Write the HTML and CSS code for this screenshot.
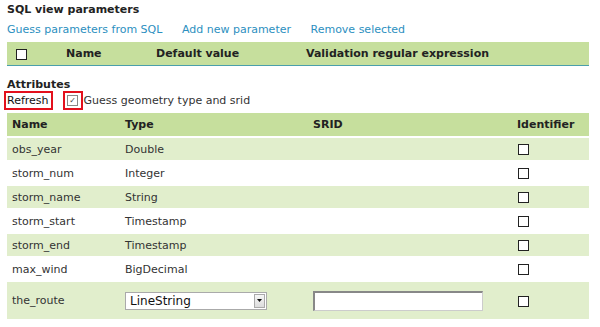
FILE: index.html
```html
<!DOCTYPE html>
<html lang="en">
<head>
  <meta charset="UTF-8">
  <title>SQL view</title>
  <link rel="stylesheet" href="styles.css">
</head>
<body>
  <div class="page">
    <h3 class="sectionTitle">SQL view parameters</h3>
    <div class="links">
      <a href="#">Guess parameters from SQL</a>
      <a href="#">Add new parameter</a>
      <a href="#">Remove selected</a>
    </div>
    <table class="grid paramGrid">
      <thead>
        <tr>
          <th class="colCheck"><span class="box"></span></th>
          <th class="colPName">Name</th>
          <th class="colDefault">Default value</th>
          <th>Validation regular expression</th>
        </tr>
      </thead>
    </table>

    <h3 class="sectionTitle attrTitle">Attributes</h3>
    <div class="attrTools">
      <a href="#" class="refresh">Refresh</a>
      <span class="guessBox"><span class="box checked">&#10003;</span></span>
      <span class="guessLabel">Guess geometry type and srid</span>
    </div>
    <table class="grid attrGrid">
      <thead>
        <tr>
          <th class="colName">Name</th>
          <th class="colType">Type</th>
          <th class="colSrid">SRID</th>
          <th>Identifier</th>
        </tr>
      </thead>
      <tbody>
        <tr class="odd"><td>obs_year</td><td>Double</td><td></td><td><span class="box"></span></td></tr>
        <tr><td>storm_num</td><td>Integer</td><td></td><td><span class="box"></span></td></tr>
        <tr class="odd"><td>storm_name</td><td>String</td><td></td><td><span class="box"></span></td></tr>
        <tr><td>storm_start</td><td>Timestamp</td><td></td><td><span class="box"></span></td></tr>
        <tr class="odd"><td>storm_end</td><td>Timestamp</td><td></td><td><span class="box"></span></td></tr>
        <tr><td>max_wind</td><td>BigDecimal</td><td></td><td><span class="box"></span></td></tr>
        <tr class="odd tall">
          <td>the_route</td>
          <td>
            <div class="select">
              <span>LineString</span>
              <span class="arrow">
                <svg width="5" height="3" viewBox="0 0 5 3"><path d="M0 0h5L2.5 3z" fill="#111"/></svg>
              </span>
            </div>
          </td>
          <td><div class="textInput"></div></td>
          <td><span class="box"></span></td>
        </tr>
      </tbody>
    </table>
  </div>
</body>
</html>
```

FILE: styles.css
```css
body{
  margin: 0;
  font-family: "DejaVu Sans", Verdana, sans-serif;
  font-size: 11px;
  color: #333;
  background: #fff;
}
.page{
  padding: 3px 11px 0 7px;
}
.sectionTitle{
  margin: 0;
  font-size: 11px;
  font-weight: bold;
  line-height: 14px;
  color: #222;
}
.links{
  margin-top: 6px;
  line-height: 14px;
}
.links a{
  color: #2c8fc0;
  text-decoration: none;
  margin-right: 16px;
}
.grid{
  width: 100%;
  border-collapse: collapse;
  table-layout: fixed;
}
.grid th{
  background: #c6df9d;
  text-align: left;
  font-weight: bold;
  color: #222;
  height: 23px;
  padding: 0 5px;
  border-bottom: 1px solid #4a9fab;
}
.paramGrid{
  margin-top: 5px;
}
.paramGrid .colCheck{
  width: 40px;
  padding-left: 9px;
}
.paramGrid .colPName{
  width: 80px;
}
.paramGrid .colDefault{
  width: 140px;
}
.box{
  display: inline-block;
  width: 9px;
  height: 9px;
  border: 1px solid #222;
  background: #fff;
  vertical-align: middle;
  box-sizing: content-box;
}
.attrTitle{
  margin-top: 12px;
}
.attrTools{
  display: flex;
  align-items: center;
  margin: -1px 0 0 -3px;
  height: 19px;
}
.refresh{
  display: flex;
  align-items: center;
  height: 15px;
  color: #111;
  text-decoration: none;
  border: 2px solid #e3101c;
  padding: 0 2px 0 1px;
}
.guessBox{
  margin-left: 10px;
  border: 2px solid #e3101c;
  width: 16px;
  height: 15px;
  display: flex;
  align-items: center;
  justify-content: center;
}
.box.checked{
  border-color: #888;
  font-size: 8px;
  line-height: 9px;
  text-align: center;
  color: #444;
}
.guessLabel{
  margin-left: 1px;
}
.attrGrid{
  margin-top: 3px;
}
.attrGrid th{
  height: 23px;
}
.attrGrid td{
  height: 22px;
  padding: 0 5px;
  border-top: 2px solid #fff;
  color: #333;
}
.attrGrid tr.odd td{
  background: #e1eecc;
}
.attrGrid .colName{
  width: 103px;
}
.attrGrid .colType{
  width: 178px;
}
.attrGrid .colSrid{
  width: 194px;
}
.attrGrid td .box{
  margin-left: 1px;
}
.attrGrid tr.tall td{
  height: 37px;
}
.select{
  display: flex;
  align-items: center;
  justify-content: space-between;
  width: 136px;
  height: 16px;
  border: 1px solid #aaa;
  background: #fff;
  font-size: 12px;
  color: #111;
  padding-left: 4px;
  box-sizing: content-box;
}
.arrow{
  display: flex;
  align-items: center;
  justify-content: center;
  width: 9px;
  height: 12px;
  margin-right: 1px;
  border: 1px solid #aaa;
  background: linear-gradient(#f6f6f6, #dcdcdc);
}
.textInput{
  width: 167px;
  height: 17px;
  border: 1px solid #ccc;
  border-top: 2px solid #888;
  border-left: 2px solid #888;
  background: #fff;
}
```
